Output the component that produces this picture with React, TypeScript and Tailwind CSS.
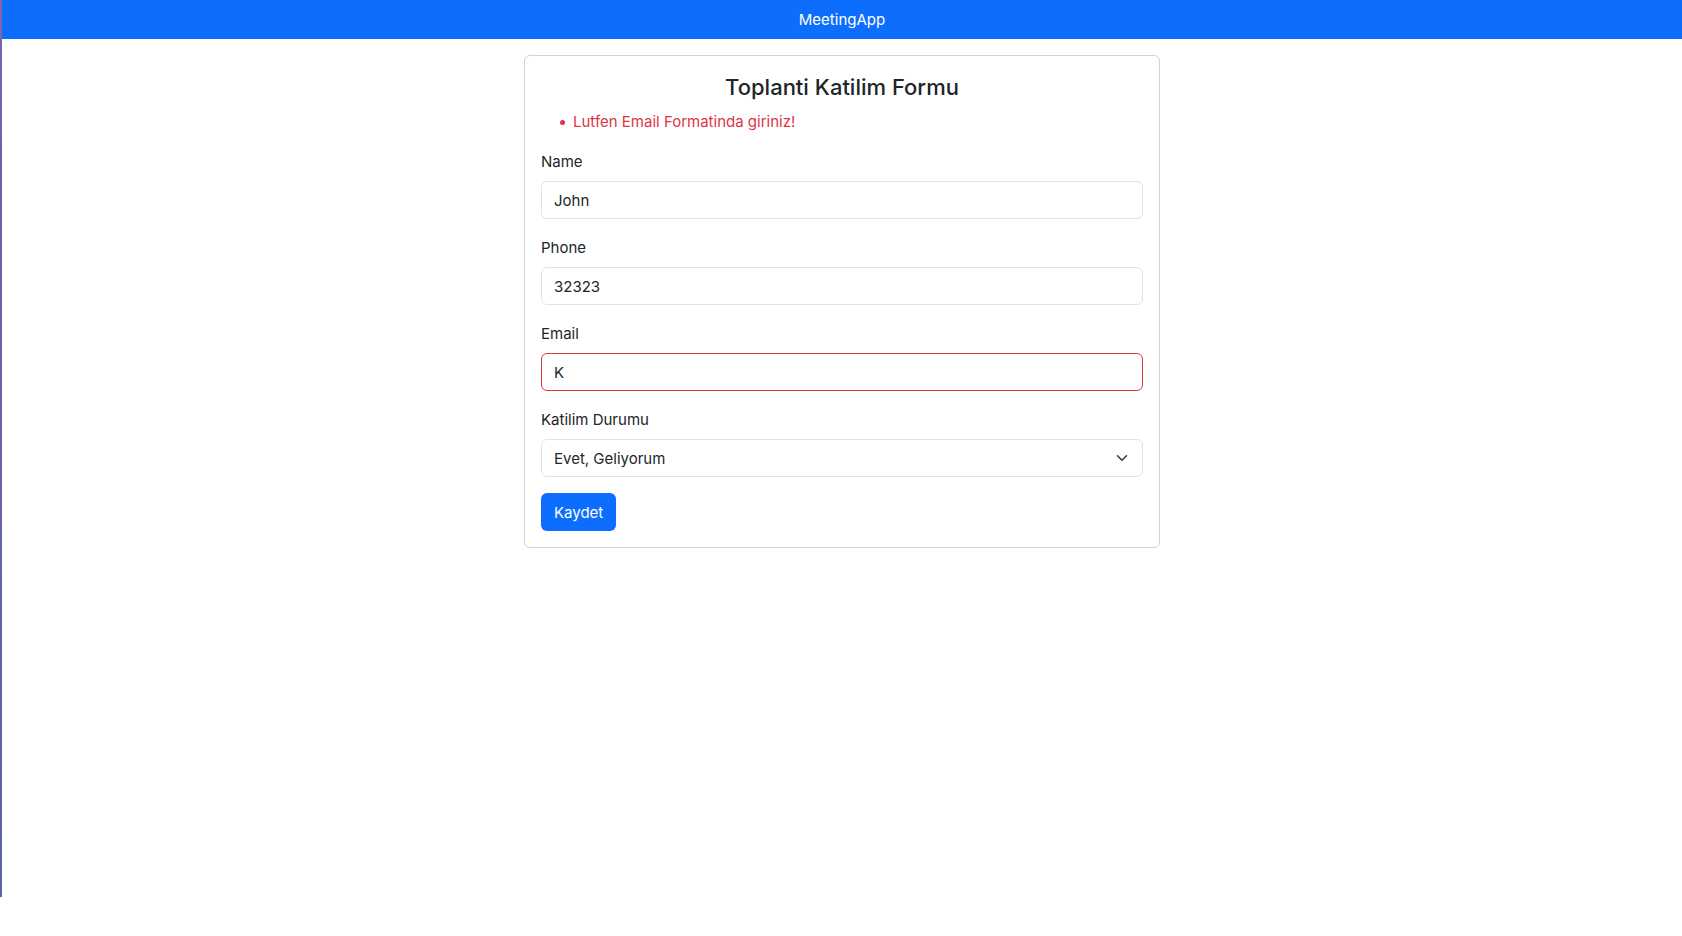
import type { ComponentProps } from "react";

const control =
  "block h-[38px] w-full rounded-md border bg-white px-3 text-[15px] leading-6 text-[#212529] outline-none focus:ring-4 focus:ring-[#0d6efd]/25";

const labelText = "mb-[7px] block pt-px";

type FieldProps = ComponentProps<"input"> & { label: string; id: string; invalid?: boolean };

function Field({ label, id, invalid = false, ...rest }: FieldProps) {
  return (
    <div className="mb-4">
      <label htmlFor={id} className={labelText}>
        {label}
      </label>
      <input
        id={id}
        name={id}
        aria-invalid={invalid}
        className={`${control} ${invalid ? "border-[#dc3545]" : "border-[#dee2e6]"}`}
        {...rest}
      />
    </div>
  );
}

export default function App() {
  return (
    <div className="flex min-h-screen items-start bg-white font-['Inter','Liberation_Sans',sans-serif] text-[15px] leading-6 text-[#212529]">
      <div className="h-[calc(100vh-39px)] w-0.5 shrink-0 bg-linear-to-b from-[#8068a8] via-[#6a66b0] via-10% to-[#5b5fb0]" />
      <div className="min-w-0 flex-1">
        <header className="bg-[#0d6efd] pt-2 pb-[7px] text-center text-white">
          <a href="#">MeetingApp</a>
        </header>
        <main className="mx-auto mt-4 w-full max-w-[636px] rounded-md border border-[#d0d1d2] bg-white px-4 pt-[17px] pb-4">
          <h1 className="mb-2 text-center text-[22px] leading-[29px] font-medium">Toplanti Katilim Formu</h1>
          <ul className="mb-[15px] pl-[19px] text-[#dc3545]">
            <li className="flex items-center gap-2 before:size-[5px] before:rounded-full before:bg-[#dc3545]">
              Lutfen Email Formatinda giriniz!
            </li>
          </ul>
          <form noValidate onSubmit={(event) => event.preventDefault()}>
            <Field label="Name" id="name" type="text" defaultValue="John" />
            <Field label="Phone" id="phone" type="text" defaultValue="32323" />
            <Field label="Email" id="email" type="email" defaultValue="K" invalid />
            <div className="mb-4">
              <label htmlFor="attendance" className={labelText}>
                Katilim Durumu
              </label>
              <div className="relative">
                <select
                  id="attendance"
                  name="attendance"
                  defaultValue="yes"
                  className={`${control} appearance-none border-[#dee2e6] pt-0.5 pr-9`}
                >
                  <option value="yes">Evet, Geliyorum</option>
                </select>
                <svg
                  viewBox="0 0 16 16"
                  aria-hidden="true"
                  className="pointer-events-none absolute top-1/2 right-[13px] h-3 w-4 -translate-y-1/2"
                >
                  <path
                    d="m2 5 6 6 6-6"
                    fill="none"
                    stroke="#343a40"
                    strokeWidth="2"
                    strokeLinecap="round"
                    strokeLinejoin="round"
                  />
                </svg>
              </div>
            </div>
            <button type="submit" className="h-[38px] rounded-md bg-[#0d6efd] px-[13px] pt-px text-white">
              Kaydet
            </button>
          </form>
        </main>
      </div>
    </div>
  );
}
